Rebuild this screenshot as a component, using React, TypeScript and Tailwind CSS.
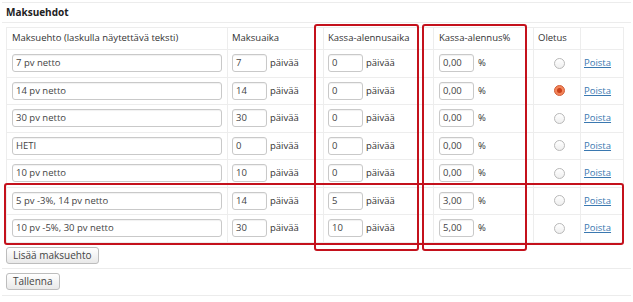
import React from "react";

type Term = {
    name: string;
    days: string;
    discountDays: string;
    discount: string;
    isDefault?: boolean;
};

const terms: Term[] = [
    { name: "7 pv netto", days: "7", discountDays: "0", discount: "0,00" },
    { name: "14 pv netto", days: "14", discountDays: "0", discount: "0,00", isDefault: true },
    { name: "30 pv netto", days: "30", discountDays: "0", discount: "0,00" },
    { name: "HETI", days: "0", discountDays: "0", discount: "0,00" },
    { name: "10 pv netto", days: "10", discountDays: "0", discount: "0,00" },
    { name: "5 pv -3%, 14 pv netto", days: "14", discountDays: "5", discount: "3,00" },
    { name: "10 pv -5%, 30 pv netto", days: "30", discountDays: "10", discount: "5,00" },
];

const Field = ({ value, className }: { value: string; className: string }) => (
    <div
        className={`h-[18px] border border-[#c9c9c9] rounded-[3px] bg-white pl-[3px] flex items-center text-[#444] shadow-[inset_0_1px_1px_rgba(0,0,0,0.06)] ${className}`}
    >
        {value}
    </div>
);

const Radio = ({ checked }: { checked?: boolean }) =>
    checked ? (
        <span className="inline-flex w-[11px] h-[11px] rounded-full bg-[#f3855a] border border-[#d2603a] items-center justify-center">
            <span className="w-[5px] h-[5px] rounded-full bg-[#c8401a]" />
        </span>
    ) : (
        <span className="inline-block w-[11px] h-[11px] rounded-full border border-[#b9b9b9] bg-gradient-to-b from-white to-[#efefef]" />
    );

const Button = ({ label }: { label: string }) => (
    <button className="h-[17px] px-[6px] border border-[#bdbdbd] rounded-[3px] bg-gradient-to-b from-white to-[#e9e9e9] text-[#444] text-[10px] leading-none">
        {label}
    </button>
);

const Row = ({ term }: { term: Term }) => (
    <tr className="h-[27.5px]">
        <td className="border border-[#ededed] pl-[5px] pr-[4px]">
            <Field value={term.name} className="w-[210px]" />
        </td>
        <td className="border border-[#ededed] pl-[4px]">
            <div className="flex items-center gap-[3px]">
                <Field value={term.days} className="w-[35px]" />
                <span>päivää</span>
            </div>
        </td>
        <td className="border border-[#ededed] pl-[4px]">
            <div className="flex items-center gap-[3px]">
                <Field value={term.discountDays} className="w-[35px]" />
                <span>päivää</span>
            </div>
        </td>
        <td className="border border-[#ededed] pl-[5px]">
            <div className="flex items-center gap-[4px]">
                <Field value={term.discount} className="w-[35px]" />
                <span>%</span>
            </div>
        </td>
        <td className="border border-[#ededed] text-right pr-[15px]">
            <div className="flex justify-end">
                <Radio checked={term.isDefault} />
            </div>
        </td>
        <td className="border border-[#ededed] pl-[3px]">
            <a href="#" className="text-[#3a78b0] underline">
                Poista
            </a>
        </td>
    </tr>
);

export default function App() {
    return (
        <div
            className="relative w-[633px] h-[302px] bg-white text-[#333] text-[9.5px] overflow-hidden"
            style={{ fontFamily: "'Open Sans', 'Liberation Sans', sans-serif" }}
        >
            <div className="mt-[2px] mx-[2px] border-t border-[#ececec]">
                <div className="h-[20px] pl-[4px] flex items-center font-bold text-[10px] text-[#222] border-b border-[#ececec]">
                    Maksuehdot
                </div>
                <div className="pl-[4px] pr-[8px] pt-[4px]">
                    <table className="w-[617px] table-fixed border-collapse">
                        <colgroup>
                            <col className="w-[221px]" />
                            <col className="w-[96px]" />
                            <col className="w-[110px]" />
                            <col className="w-[100px]" />
                            <col className="w-[47px]" />
                            <col className="w-[43px]" />
                        </colgroup>
                        <thead>
                            <tr className="h-[22px] text-left">
                                <th className="border border-[#ededed] font-normal pl-[5px]">
                                    Maksuehto (laskulla näytettävä teksti)
                                </th>
                                <th className="border border-[#ededed] font-normal pl-[4px]">Maksuaika</th>
                                <th className="border border-[#ededed] font-normal pl-[4px]">Kassa-alennusaika</th>
                                <th className="border border-[#ededed] font-normal pl-[5px]">Kassa-alennus%</th>
                                <th className="border border-[#ededed] font-normal pl-[4px]">Oletus</th>
                                <th className="border border-[#ededed]" />
                            </tr>
                        </thead>
                        <tbody>
                            {terms.map((t) => (
                                <Row key={t.name} term={t} />
                            ))}
                        </tbody>
                    </table>
                </div>
                <div className="pl-[4px] pt-[4px] pb-[4px] border-b border-[#ececec]">
                    <Button label="Lisää maksuehto" />
                </div>
                <div className="pl-[4px] pt-[4px] pb-[5px] border-b border-[#ececec]">
                    <Button label="Tallenna" />
                </div>
            </div>

            {/* red highlight boxes drawn over the table */}
            <div className="absolute left-[314px] top-[24px] w-[105px] h-[227px] border-2 border-[#c4111c] rounded-[3px]" />
            <div className="absolute left-[422px] top-[24px] w-[105px] h-[227px] border-2 border-[#c4111c] rounded-[3px]" />
            <div className="absolute left-[4px] top-[183px] w-[620px] h-[62px] border-2 border-[#c4111c] rounded-[3px]" />
        </div>
    );
}
